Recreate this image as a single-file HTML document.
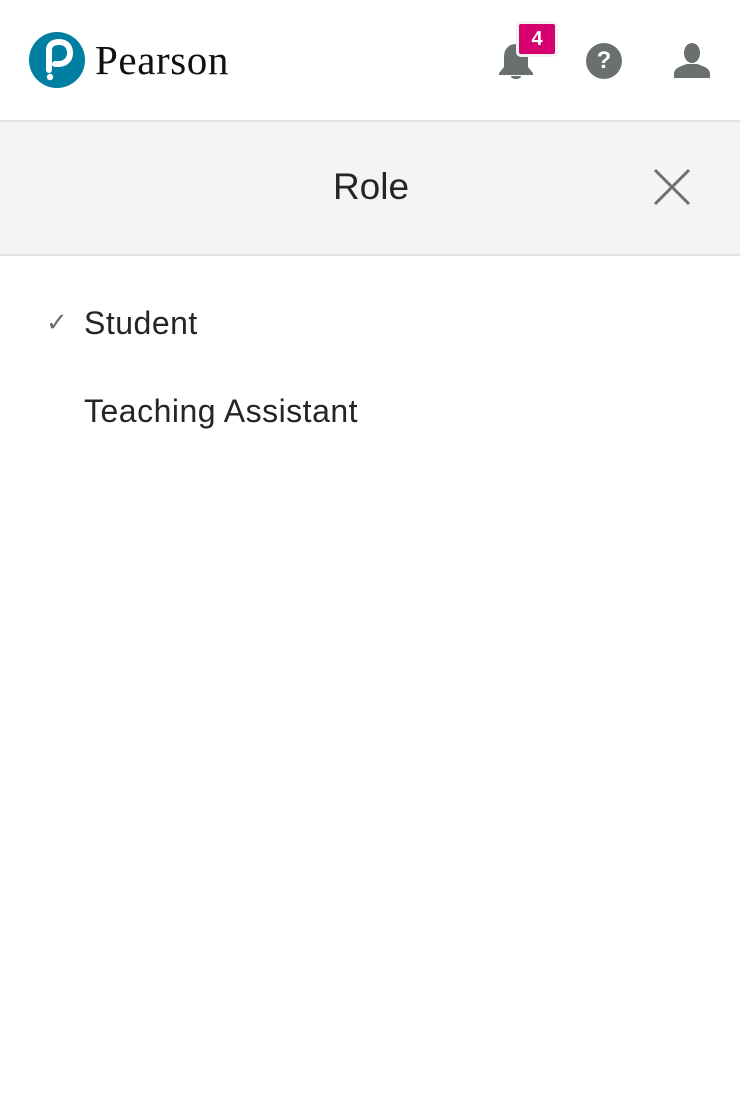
<!DOCTYPE html>
<html><head><style>
body{margin:0;width:740px;height:1106px;background:#fff;font-family:"Liberation Sans",sans-serif;position:relative;overflow:hidden}
.a{position:absolute}
</style></head><body>
<svg class="a" style="left:29px;top:30px" width="58" height="60" viewBox="0 0 58 60">
<circle cx="28" cy="30" r="28" fill="#007fa3"/>
<path d="M20 40 V20 C20 14 25 12 30 12 C37 12 41 16 41 23 C41 30 36 34 29 34 L26 34" fill="none" stroke="#fff" stroke-width="6" stroke-linecap="round"/>
<circle cx="21" cy="47" r="3.2" fill="#fff"/>
</svg>
<div class="a" style="left:95px;top:36px;font-family:'Liberation Serif',serif;font-size:41px;color:#111;letter-spacing:0.6px">Pearson</div>
<svg class="a" style="left:497px;top:42px" width="38" height="38" viewBox="0 0 38 38">
<path d="M19 2 C11 2 7 8 7 15 V25 L2 31 V33 H36 V31 L31 25 V15 C31 8 27 2 19 2Z" fill="#6a7070"/>
<path d="M14 34 C14 38 24 38 24 34Z" fill="#6a7070"/>
</svg>
<div class="a" style="left:516px;top:21px;width:36px;height:30px;background:#d6006e;border:3px solid #f3f3f3;border-radius:5px;color:#fff;font-weight:bold;font-size:20px;text-align:center;line-height:30px">4</div>
<div class="a" style="left:586px;top:43px;width:36px;height:36px;border-radius:50%;background:#6a7070;color:#fff;font-weight:bold;font-size:24px;text-align:center;line-height:36px">?</div>
<svg class="a" style="left:673px;top:41px" width="38" height="38" viewBox="0 0 38 38">
<ellipse cx="19" cy="12" rx="8" ry="10" fill="#6a7070"/>
<path d="M1 37 V33 C1 27 8 25 14 23 H24 C30 25 37 27 37 33 V37Z" fill="#6a7070"/>
</svg>
<div class="a" style="left:0;top:120px;width:740px;height:132px;background:#f4f4f4;border-top:2px solid #e2e2e2;border-bottom:2px solid #e2e2e2"></div>
<div class="a" style="left:0;top:166px;width:740px;text-align:center;font-size:37px;color:#252525"><span style="margin-left:2px">Role</span></div>
<svg class="a" style="left:653px;top:168px" width="38" height="38" viewBox="0 0 38 38"><path d="M2 2 L36 36 M36 2 L2 36" stroke="#6a7070" stroke-width="3"/></svg>
<div class="a" style="left:46px;top:307px;font-size:26px;color:#6a7070">✓</div>
<div class="a" style="left:84px;top:305px;font-size:32px;color:#252525;letter-spacing:0.5px">Student</div>
<div class="a" style="left:84px;top:393px;font-size:32px;color:#252525;letter-spacing:0.5px">Teaching Assistant</div>
</body></html>
